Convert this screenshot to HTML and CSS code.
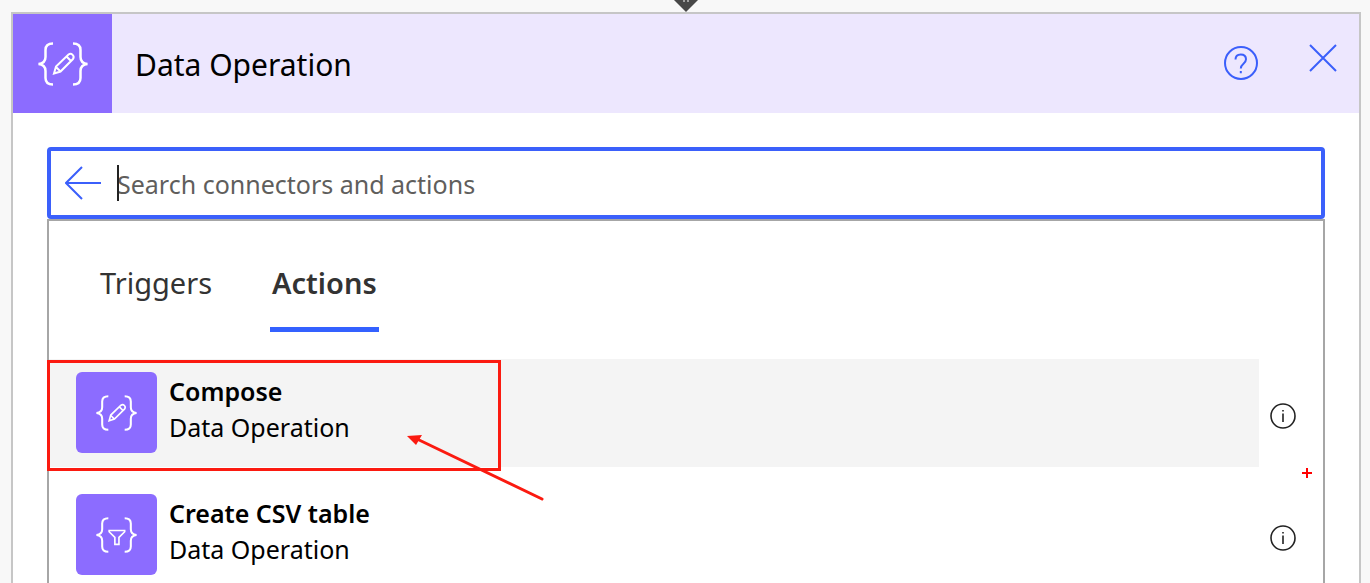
FILE: index.html
```
<!DOCTYPE html>
<html lang="en">
<head>
<meta charset="utf-8">
<meta name="viewport" content="width=device-width, initial-scale=1">
<title>Data Operation</title>
<link rel="stylesheet" href="styles.css">
</head>
<body>

<svg class="defs" aria-hidden="true">
  <defs>
    <symbol id="braces" viewBox="0 0 50 44">
      <path d="M15 1.500C9.500 1.500 7.500 4 7.500 8v7c0 4-2 6.500-7 7C5.500 22.500 7.500 25 7.500 29v7c0 4 2 6.500 7.500 6.500M35 1.500c5.500 0 7.500 2.500 7.500 6.500v7c0 4 2 6.500 7 7C44.500 22.500 42.500 25 42.500 29v7c0 4-2 6.500-7.500 6.500"/>
    </symbol>
    <symbol id="pencil" viewBox="0 0 50 44">
      <path class="thin" d="M16 31.500l2-7L30.500 12.500c3-2 6.500 1.500 4.500 4.500L22.500 29.500zM18 25l4.500 4.500M28.500 14.500l4.500 4.500"/>
    </symbol>
    <symbol id="funnel" viewBox="0 0 50 44">
      <path class="thin" d="M16 16.500h19v1.500L28 25v8.500h-5v-8.500L16 18z"/>
    </symbol>
    <symbol id="info" viewBox="0 0 26 26">
      <circle cx="13" cy="13" r="12"/>
      <path d="M13 10.500V19M13 7v1.500"/>
    </symbol>
  </defs>
</svg>

<svg class="connector" viewBox="0 0 24 12" aria-hidden="true">
  <path d="M0 0h24L12 12z" fill="#484848"/>
  <path d="M10 0v2M14 0v2" stroke="#f8f8f8"/>
</svg>

<main class="card">
  <header class="card-header">
    <div class="card-icon">
      <svg class="glyph" aria-hidden="true"><use href="#braces"/><use href="#pencil"/></svg>
    </div>
    <h1>Data Operation</h1>
    <button class="icon-button help" type="button" aria-label="Help">
      <svg width="34" height="34" viewBox="0 0 34 34">
        <circle cx="17" cy="17" r="16"/>
        <path d="M11.500 13.500c0-3.200 2-5 5.200-5s5.300 1.800 5.300 4.800c0 4.700-5.200 4.200-5.200 9.200M16.800 25v2.200"/>
      </svg>
    </button>
    <button class="icon-button close" type="button" aria-label="Close">
      <svg width="28" height="28" viewBox="0 0 28 28"><path d="M1 1l26 26M27 1L1 27"/></svg>
    </button>
  </header>

  <div class="card-body">
    <div class="search">
      <button class="icon-button" type="button" aria-label="Back">
        <svg width="36" height="34" viewBox="0 0 36 34"><path d="M17 1L1 17l16 16M1 17h35"/></svg>
      </button>
      <div class="search-field">
        <input type="text" placeholder="Search connectors and actions" aria-label="Search connectors and actions">
        <span class="caret"></span>
      </div>
    </div>

    <section class="panel">
      <nav class="tabs">
        <button class="tab" type="button">Triggers</button>
        <button class="tab active" type="button">Actions</button>
      </nav>

      <ul class="actions">
        <li class="selected">
          <button class="action" type="button">
            <span class="tile"><svg class="glyph" aria-hidden="true"><use href="#braces"/><use href="#pencil"/></svg></span>
            <span class="label"><strong>Compose</strong><span>Data Operation</span></span>
          </button>
          <button class="info" type="button" aria-label="About Compose"><svg><use href="#info"/></svg></button>

          <!-- markup drawn over the row -->
          <span class="highlight"></span>
          <svg class="arrow" viewBox="0 0 138 68" aria-hidden="true">
            <path d="M10 4l125 60" stroke="#fb1a10" stroke-width="3" stroke-linecap="round"/>
            <path d="M0 1l15-1-6 10z" fill="#fb1a10"/>
          </svg>
          <svg class="cross" viewBox="0 0 10 10" aria-hidden="true"><path d="M5 0v10M0 5h10"/></svg>
        </li>
        <li>
          <button class="action" type="button">
            <span class="tile"><svg class="glyph" aria-hidden="true"><use href="#braces"/><use href="#funnel"/></svg></span>
            <span class="label"><strong>Create CSV table</strong><span>Data Operation</span></span>
          </button>
          <button class="info" type="button" aria-label="About Create CSV table"><svg><use href="#info"/></svg></button>
        </li>
      </ul>
    </section>
  </div>
</main>

</body>
</html>
```

FILE: styles.css
```
* {
  box-sizing: border-box;
}
body {
  display: flex;
  flex-direction: column;
  height: 100vh;
  margin: 0;
  padding: 12px 9px 0 11px;
  overflow: hidden;
  background: #f8f8f8;
  color: #000;
  font-family: "Noto Sans", "Open Sans", sans-serif;
  font-size: 25px;
}
button {
  padding: 0;
  border: 0;
  background: none;
  color: inherit;
  font: inherit;
  cursor: pointer;
}
svg {
  display: block;
  fill: none;
}
.defs {
  position: absolute;
  width: 0;
  height: 0;
}
.connector {
  position: absolute;
  top: 0;
  left: 50%;
  width: 24px;
  height: 12px;
  margin-left: -11px;
}

/* card */
.card {
  display: flex;
  flex: 1;
  flex-direction: column;
  border: 2px solid #c6c6c6;
  border-bottom: 0;
  background: #fff;
}
.card-header {
  display: flex;
  align-items: center;
  padding-right: 22px;
  background: #ede7fe;
}
.card-icon {
  display: flex;
  align-items: center;
  justify-content: center;
  width: 99px;
  height: 99px;
  background: #8c6cff;
}
.glyph {
  width: 50px;
  height: 44px;
  overflow: visible;
  stroke: #fff;
  stroke-width: 2.5;
}
.thin {
  stroke-width: 2;
}
.card-header h1 {
  flex: 1;
  margin: 0;
  padding: 2px 0 0 23px;
  font-size: 30px;
  font-weight: 400;
  line-height: 40px;
}
.icon-button svg {
  stroke: #3b5ffb;
  stroke-width: 2;
}
.help {
  padding-bottom: 2px;
}
.close {
  margin-left: 51px;
  padding-bottom: 12px;
}
.card-body {
  display: flex;
  flex: 1;
  flex-direction: column;
  padding: 34px 34px 0;
}

/* search */
.search {
  display: flex;
  align-items: center;
  height: 72px;
  padding: 0 14px;
  border: 4px solid #3b60fb;
  border-radius: 4px;
}
.search-field {
  position: relative;
  flex: 1;
  margin-left: 16px;
}
.search input {
  width: 100%;
  height: 36px;
  padding: 2px 0 0;
  border: 0;
  outline: 0;
  background: none;
  color: #000;
  font: inherit;
}
.search input::placeholder {
  color: #605e5c;
  opacity: 1;
}
.caret {
  position: absolute;
  top: 0;
  left: 0;
  width: 2px;
  height: 36px;
  background: #222;
}

/* results */
.panel {
  flex: 1;
  border: 2px solid #a6a6a6;
  border-bottom: 0;
}
.tabs {
  display: flex;
  gap: 56px;
  padding: 36px 49px 0;
}
.tab {
  height: 75px;
  padding: 0 2px 18px;
  border-bottom: 5px solid transparent;
  color: #333;
  font-size: 29px;
  line-height: 44px;
}
.tab.active {
  border-color: #3461ff;
  font-weight: 600;
}
.actions {
  display: grid;
  gap: 14px;
  margin: 27px 0 0;
  padding: 0;
  list-style: none;
}
.actions li {
  position: relative;
  display: flex;
  align-items: center;
  padding-right: 27px;
}
.action {
  display: flex;
  flex: 1;
  gap: 12px;
  height: 108px;
  padding: 13px 27px;
  text-align: left;
}
.selected .action {
  background: #f4f4f4;
}
.tile {
  display: flex;
  align-items: center;
  justify-content: center;
  width: 81px;
  height: 81px;
  border-radius: 6px;
  background: #8c6cff;
}
.tile .glyph {
  width: 41px;
  height: 36px;
}
.label {
  display: flex;
  flex-direction: column;
  padding-top: 1px;
  line-height: 36px;
}
.label strong {
  font-weight: 600;
}
.info {
  padding-top: 5px;
  margin-left: 11px;
}
.info svg {
  width: 26px;
  height: 26px;
  stroke: #222;
  stroke-width: 1.6;
}

/* markup */
.highlight {
  position: absolute;
  top: 1px;
  left: -2px;
  width: 454px;
  height: 111px;
  border: 3px solid #fb1a10;
  pointer-events: none;
}
.arrow {
  position: absolute;
  top: 76px;
  left: 358px;
  width: 138px;
  height: 68px;
  pointer-events: none;
}
.cross {
  position: absolute;
  top: 109px;
  right: 11px;
  width: 10px;
  height: 10px;
  stroke: #f00;
  stroke-width: 2;
}
```
